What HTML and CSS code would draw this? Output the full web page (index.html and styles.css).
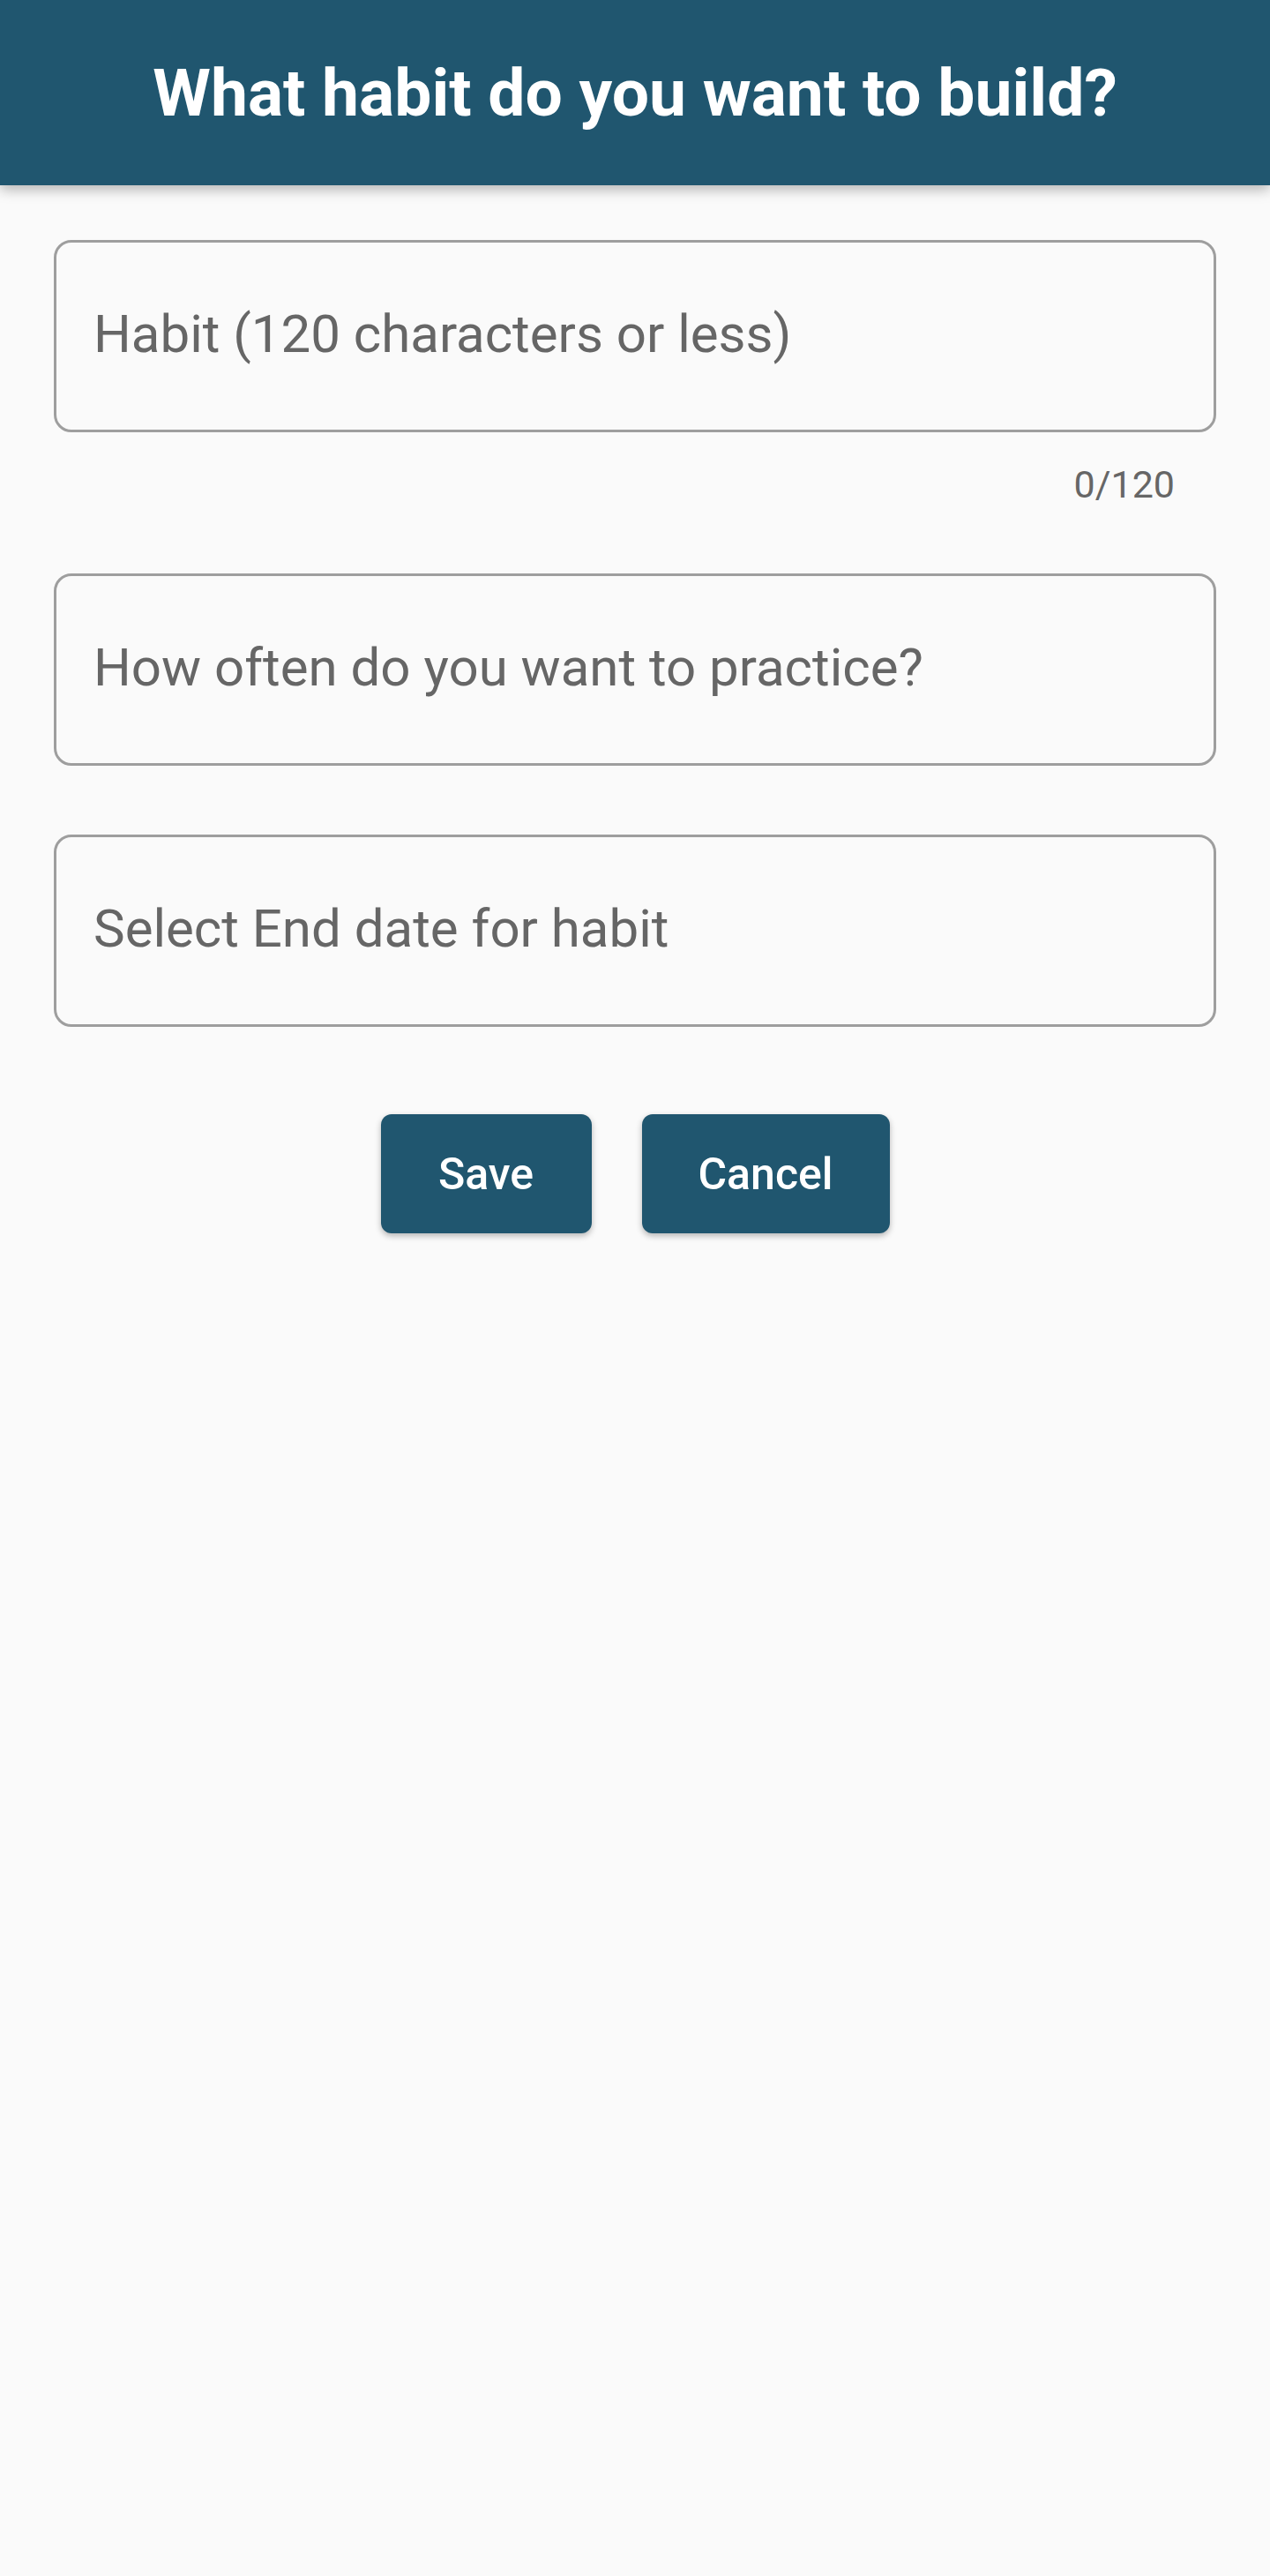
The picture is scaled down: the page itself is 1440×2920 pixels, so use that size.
FILE: index.html
```html
<!DOCTYPE html>
<html lang="en">
<head>
<meta charset="utf-8">
<title>New habit</title>
<link rel="stylesheet" href="styles.css">
</head>
<body>
<header class="app-bar">
  <h1 class="app-title">What habit do you want to build?</h1>
</header>
<main class="form">
  <div class="field-group">
    <input class="field" type="text" placeholder="Habit (120 characters or less)">
    <div class="counter">0/120</div>
  </div>
  <input class="field field-second" type="text" placeholder="How often do you want to practice?">
  <input class="field field-third" type="text" placeholder="Select End date for habit">
  <div class="actions">
    <button class="btn btn-save" type="button">Save</button>
    <button class="btn btn-cancel" type="button">Cancel</button>
  </div>
</main>
</body>
</html>
```

FILE: styles.css
```css
html, body {
  margin: 0;
  padding: 0;
  background: #fafafa;
}

body {
  font-family: Roboto, "Liberation Sans", Arial, sans-serif;
  min-height: 2920px;
}

.app-bar {
  height: 210px;
  background: #20566f;
  display: flex;
  align-items: center;
  justify-content: center;
  box-shadow: 0 5px 14px rgba(0, 0, 0, 0.28);
  position: relative;
  z-index: 1;
}

.app-title {
  margin: 0;
  color: #ffffff;
  font-size: 75px;
  font-weight: 700;
  line-height: 1;
}

.form {
  padding: 62px 61px 0;
  display: flex;
  flex-direction: column;
}

.field-group {
  display: flex;
  flex-direction: column;
}

.field {
  box-sizing: border-box;
  width: 100%;
  height: 218px;
  margin: 0;
  padding: 0 42px 5px;
  border: 3px solid #9e9e9e;
  border-radius: 20px;
  background: transparent;
  font-family: Roboto, "Liberation Sans", Arial, sans-serif;
  font-size: 60px;
  color: #333;
  outline: none;
}

.field::placeholder {
  color: #666666;
  opacity: 1;
}

.counter {
  align-self: flex-end;
  margin: 34px 47px 0 0;
  font-size: 43px;
  line-height: 50px;
  color: #666666;
}

.field-second {
  margin-top: 76px;
}

.field-third {
  margin-top: 78px;
}

.actions {
  margin-top: 99px;
  display: flex;
  justify-content: center;
  gap: 57px;
}

.btn {
  height: 135px;
  border: none;
  border-radius: 12px;
  background: #20566f;
  color: #ffffff;
  font-family: Roboto, "Liberation Sans", Arial, sans-serif;
  font-size: 50px;
  font-weight: 500;
  box-shadow: 0 3px 7px rgba(0, 0, 0, 0.28);
  cursor: pointer;
}

.btn-save {
  width: 239px;
}

.btn-cancel {
  width: 281px;
}
```
